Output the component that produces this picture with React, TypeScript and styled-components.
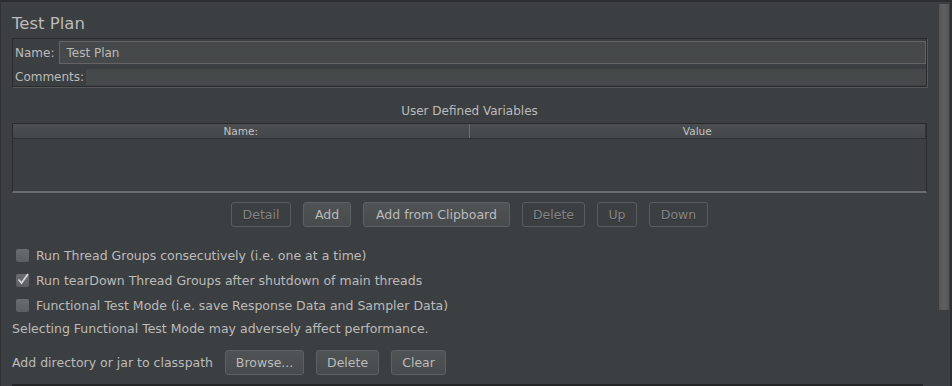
import React from "react";
import styled, { createGlobalStyle } from "styled-components";

const Global = createGlobalStyle`
  html, body { margin: 0; padding: 0; background: #3c3f41; }
  body { font-family: "DejaVu Sans", "Liberation Sans", sans-serif; }
`;

const Window = styled.div`
  width: 952px;
  height: 386px;
  box-sizing: border-box;
  background: #3c3f41;
  border-top: 2px solid #2b2d2e;
  border-left: 1px solid #2f3132;
  display: flex;
  overflow: hidden;
  color: #bbbbbb;
  font-size: 12px;
`;

const Main = styled.div`
  flex: 1;
  padding: 0 11px 0 11px;
  display: flex;
  flex-direction: column;
`;

const Title = styled.div`
  font-size: 16.5px;
  line-height: 20px;
  margin-top: 12px;
  height: 24px;
  color: #bbbbbb;
`;

const InfoPanel = styled.div`
  border: 1px solid #2b2b2b;
  box-shadow: 1px 1px 0 #56595b;
  padding: 2px 0 1px 1px;
  display: flex;
  flex-direction: column;
  gap: 5px;
`;

const FieldRow = styled.div`
  display: flex;
  align-items: center;
`;

const Label = styled.span<{ $gap: number }>`
  padding: 0 ${(p) => p.$gap}px 0 1px;
  white-space: nowrap;
`;

const Field = styled.div<{ $h: number; $bordered?: boolean }>`
  flex: 1;
  height: ${(p) => p.$h}px;
  box-sizing: border-box;
  background: #45494a;
  border: ${(p) => (p.$bordered ? "1px solid #646464" : "none")};
  display: flex;
  align-items: center;
  padding-left: 6px;
  color: #bbbbbb;
`;

const SectionTitle = styled.div`
  text-align: center;
  margin-top: 17px;
  height: 19px;
  line-height: 14px;
`;

const Table = styled.div`
  height: 70px;
  box-sizing: border-box;
  border: 1px solid #2b2b2b;
  border-bottom: 2px solid #6a6d6f;
  display: flex;
  flex-direction: column;
`;

const HeaderRow = styled.div`
  display: flex;
  height: 14px;
  background: linear-gradient(#4a4e50, #43474a);
  border-bottom: 1px solid #2f3133;
  font-size: 10.5px;
  line-height: 14px;
  color: #c4c4c4;
`;

const HeaderCell = styled.div<{ $last?: boolean }>`
  flex: 1;
  text-align: center;
  border-right: ${(p) => (p.$last ? "1px solid #2f3133" : "1px solid #6a6d6f")};
`;

const TableBody = styled.div`
  flex: 1;
  background: #3c3f41;
`;

const ButtonBar = styled.div`
  display: flex;
  justify-content: center;
  gap: 12px;
  margin-top: 9px;
`;

const Button = styled.div<{ $disabled?: boolean; $w: number }>`
  width: ${(p) => p.$w}px;
  height: 25px;
  box-sizing: border-box;
  border: 1px solid ${(p) => (p.$disabled ? "#5a5d5f" : "#5e6163")};
  border-radius: 3px;
  background: ${(p) =>
    p.$disabled ? "transparent" : "linear-gradient(#4f5354, #474b4d)"};
  color: ${(p) => (p.$disabled ? "#838587" : "#bbbbbb")};
  text-shadow: ${(p) => (p.$disabled ? "0 1px 0 #2f3133" : "none")};
  display: flex;
  align-items: center;
  justify-content: center;
  font-size: 12.5px;
`;

const Options = styled.div`
  margin-top: 16px;
  display: flex;
  flex-direction: column;
`;

const CheckRow = styled.div`
  display: flex;
  align-items: center;
  height: 25px;
  padding-left: 4px;
  font-size: 12.5px;
`;

const Box = styled.span`
  width: 13px;
  height: 13px;
  box-sizing: border-box;
  background: linear-gradient(#6a6d6f, #5c5f61);
  border-radius: 2px;
  margin-right: 7px;
  position: relative;
  display: inline-block;
`;

const Tick = styled.svg`
  position: absolute;
  left: 0;
  top: -2px;
`;

const Note = styled.div`
  height: 22px;
  line-height: 22px;
  font-size: 12.5px;
`;

const ClassRow = styled.div`
  display: flex;
  align-items: center;
  gap: 12px;
  margin-top: 10px;
  font-size: 12.5px;
`;

const BottomLine = styled.div`
  margin-top: 9px;
  height: 2px;
  background: #232526;
  margin-right: 4px;
`;

const ScrollTrack = styled.div`
  width: 14px;
  display: flex;
  padding-top: 2px;
  box-sizing: border-box;
  border-right: 2px solid #2e3031;
`;

const Thumb = styled.div`
  width: 10px;
  height: 306px;
  margin-left: 1px;
  background: linear-gradient(90deg, #565656, #5f5f5f 50%, #565656);
  border-radius: 1px;
`;

function Check({ checked, label }: { checked?: boolean; label: string }) {
  return (
    <CheckRow>
      <Box>
        {checked && (
          <Tick width="14" height="14" viewBox="0 0 14 14">
            <path d="M2.5 7.5 L5.5 11 L12 2" fill="none" stroke="#d6d6d6" strokeWidth="1.8" />
          </Tick>
        )}
      </Box>
      {label}
    </CheckRow>
  );
}

export default function App() {
  return (
    <>
      <Global />
      <Window>
        <Main>
          <Title>Test Plan</Title>
          <InfoPanel>
            <FieldRow>
              <Label $gap={5}>Name:</Label>
              <Field $h={23} $bordered>
                Test Plan
              </Field>
            </FieldRow>
            <FieldRow>
              <Label $gap={2}>Comments:</Label>
              <Field $h={16} />
            </FieldRow>
          </InfoPanel>
          <SectionTitle>User Defined Variables</SectionTitle>
          <Table>
            <HeaderRow>
              <HeaderCell>Name:</HeaderCell>
              <HeaderCell $last>Value</HeaderCell>
            </HeaderRow>
            <TableBody />
          </Table>
          <ButtonBar>
            <Button $disabled $w={60}>Detail</Button>
            <Button $w={48}>Add</Button>
            <Button $w={147}>Add from Clipboard</Button>
            <Button $disabled $w={63}>Delete</Button>
            <Button $disabled $w={40}>Up</Button>
            <Button $disabled $w={59}>Down</Button>
          </ButtonBar>
          <Options>
            <Check label="Run Thread Groups consecutively (i.e. one at a time)" />
            <Check checked label="Run tearDown Thread Groups after shutdown of main threads" />
            <Check label="Functional Test Mode (i.e. save Response Data and Sampler Data)" />
            <Note>Selecting Functional Test Mode may adversely affect performance.</Note>
          </Options>
          <ClassRow>
            <span>Add directory or jar to classpath</span>
            <Button $w={79}>Browse...</Button>
            <Button $w={63}>Delete</Button>
            <Button $w={55}>Clear</Button>
          </ClassRow>
          <BottomLine />
        </Main>
        <ScrollTrack>
          <Thumb />
        </ScrollTrack>
      </Window>
    </>
  );
}
